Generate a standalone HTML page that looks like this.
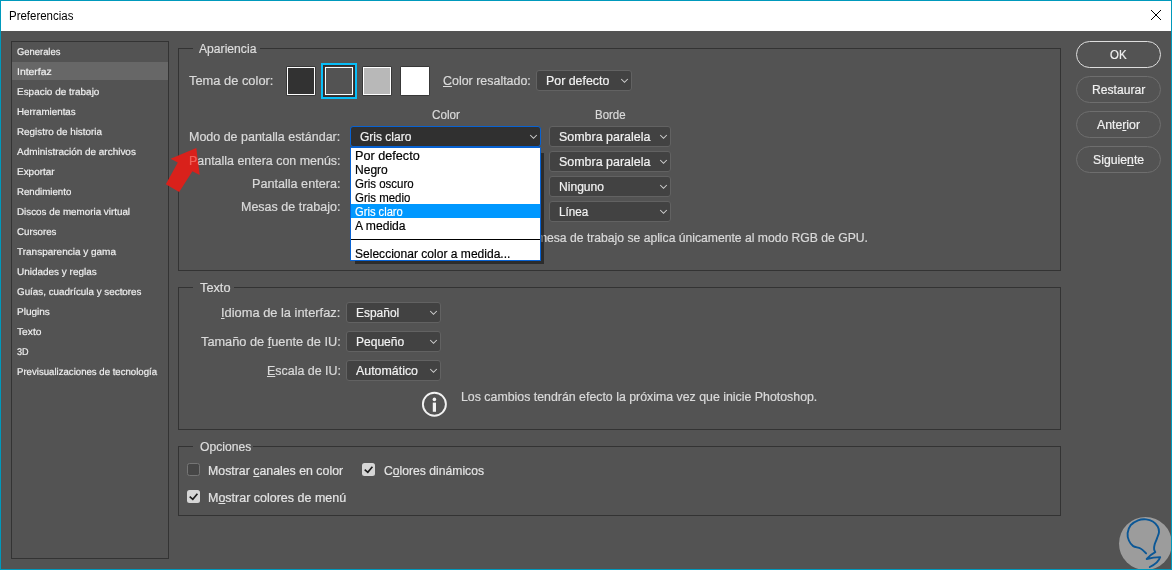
<!DOCTYPE html>
<html lang="es"><head><meta charset="utf-8"><title>Preferencias</title>
<style>
html,body{margin:0;padding:0}
body{width:1172px;height:570px;overflow:hidden;position:relative;background:#535353;font-family:"Liberation Sans",sans-serif}
.b{position:absolute;box-sizing:content-box;display:block}
.t{position:absolute;white-space:nowrap;line-height:16px;transform-origin:0 0;display:block;-webkit-text-stroke:0.2px currentColor}
u{text-decoration:underline;text-underline-offset:1px;text-decoration-thickness:1px}
</style></head>
<body>
<div class="b" style="left:1px;top:1px;width:1170px;height:30px;background:#ffffff;"></div>
<span class="t" style="left:8.60px;top:8px;font-size:12px;color:#000000;transform:scaleX(0.9559);-webkit-text-stroke:0;">Preferencias</span>
<svg class="b" style="left:1150px;top:9px" width="12" height="12" viewBox="0 0 12 12"><path d="M1 1 L11 11 M11 1 L1 11" stroke="#000" stroke-width="1.0" fill="none"/></svg>
<div class="b" style="left:11px;top:41px;width:156px;height:516px;border:1px solid #333333;"></div>
<div class="b" style="left:12px;top:62px;width:156px;height:18px;background:#676767;"></div>
<span class="t" style="left:17.10px;top:45px;font-size:9.8px;color:#f0f0f0;transform:scaleX(0.9598);text-rendering:geometricPrecision;-webkit-text-stroke:0.18px #f0f0f0;">Generales</span>
<span class="t" style="left:17.10px;top:65px;font-size:9.8px;color:#f0f0f0;transform:scaleX(1.0617);text-rendering:geometricPrecision;-webkit-text-stroke:0.18px #f0f0f0;">Interfaz</span>
<span class="t" style="left:17.10px;top:85px;font-size:9.8px;color:#f0f0f0;transform:scaleX(1.0150);text-rendering:geometricPrecision;-webkit-text-stroke:0.18px #f0f0f0;">Espacio de trabajo</span>
<span class="t" style="left:17.10px;top:105px;font-size:9.8px;color:#f0f0f0;transform:scaleX(0.9980);text-rendering:geometricPrecision;-webkit-text-stroke:0.18px #f0f0f0;">Herramientas</span>
<span class="t" style="left:17.10px;top:125px;font-size:9.8px;color:#f0f0f0;transform:scaleX(1.0067);text-rendering:geometricPrecision;-webkit-text-stroke:0.18px #f0f0f0;">Registro de historia</span>
<span class="t" style="left:17.10px;top:145px;font-size:9.8px;color:#f0f0f0;transform:scaleX(1.0153);text-rendering:geometricPrecision;-webkit-text-stroke:0.18px #f0f0f0;">Administración de archivos</span>
<span class="t" style="left:17.10px;top:165px;font-size:9.8px;color:#f0f0f0;transform:scaleX(1.0151);text-rendering:geometricPrecision;-webkit-text-stroke:0.18px #f0f0f0;">Exportar</span>
<span class="t" style="left:17.10px;top:185px;font-size:9.8px;color:#f0f0f0;transform:scaleX(0.9869);text-rendering:geometricPrecision;-webkit-text-stroke:0.18px #f0f0f0;">Rendimiento</span>
<span class="t" style="left:17.10px;top:205px;font-size:9.8px;color:#f0f0f0;transform:scaleX(1.0032);text-rendering:geometricPrecision;-webkit-text-stroke:0.18px #f0f0f0;">Discos de memoria virtual</span>
<span class="t" style="left:17.10px;top:225px;font-size:9.8px;color:#f0f0f0;transform:scaleX(0.9911);text-rendering:geometricPrecision;-webkit-text-stroke:0.18px #f0f0f0;">Cursores</span>
<span class="t" style="left:17.10px;top:245px;font-size:9.8px;color:#f0f0f0;transform:scaleX(1.0191);text-rendering:geometricPrecision;-webkit-text-stroke:0.18px #f0f0f0;">Transparencia y gama</span>
<span class="t" style="left:17.10px;top:265px;font-size:9.8px;color:#f0f0f0;transform:scaleX(1.0160);text-rendering:geometricPrecision;-webkit-text-stroke:0.18px #f0f0f0;">Unidades y reglas</span>
<span class="t" style="left:17.10px;top:285px;font-size:9.8px;color:#f0f0f0;transform:scaleX(1.0025);text-rendering:geometricPrecision;-webkit-text-stroke:0.18px #f0f0f0;">Guías, cuadrícula y sectores</span>
<span class="t" style="left:17.10px;top:305px;font-size:9.8px;color:#f0f0f0;transform:scaleX(1.0235);text-rendering:geometricPrecision;-webkit-text-stroke:0.18px #f0f0f0;">Plugins</span>
<span class="t" style="left:17.10px;top:325px;font-size:9.8px;color:#f0f0f0;transform:scaleX(1.0460);text-rendering:geometricPrecision;-webkit-text-stroke:0.18px #f0f0f0;">Texto</span>
<span class="t" style="left:17.10px;top:345px;font-size:9.8px;color:#f0f0f0;transform:scaleX(0.9258);text-rendering:geometricPrecision;-webkit-text-stroke:0.18px #f0f0f0;">3D</span>
<span class="t" style="left:17.10px;top:365px;font-size:9.8px;color:#f0f0f0;transform:scaleX(0.9815);text-rendering:geometricPrecision;-webkit-text-stroke:0.18px #f0f0f0;">Previsualizaciones de tecnología</span>
<div class="b" style="left:178px;top:48px;width:881px;height:221px;border:1px solid #333333;"></div>
<div class="b" style="left:193px;top:48px;width:67px;height:1px;background:#535353;"></div>
<span class="t" style="left:199.20px;top:41px;font-size:12.5px;color:#dedede;transform:scaleX(0.9717);">Apariencia</span>
<div class="b" style="left:178px;top:287px;width:881px;height:141px;border:1px solid #333333;"></div>
<div class="b" style="left:193px;top:287px;width:41px;height:1px;background:#535353;"></div>
<span class="t" style="left:200.20px;top:280px;font-size:12.5px;color:#dedede;transform:scaleX(1.0209);">Texto</span>
<div class="b" style="left:178px;top:446px;width:881px;height:68px;border:1px solid #333333;"></div>
<div class="b" style="left:193px;top:446px;width:60px;height:1px;background:#535353;"></div>
<span class="t" style="left:199.50px;top:439px;font-size:12.5px;color:#dedede;transform:scaleX(0.9696);">Opciones</span>
<span class="t" style="left:189.20px;top:73px;font-size:12.5px;color:#dadada;transform:scaleX(1.0295);">Tema de color:</span>
<div class="b" style="left:321px;top:63px;width:32px;height:32px;border:2px solid #08bdf7;background:#332b2b;"></div>
<div class="b" style="left:286px;top:66px;width:28px;height:28px;border:1px solid #383838;border-radius:1.5px;"></div>
<div class="b" style="left:287px;top:67px;width:26px;height:26px;border:1px solid #ffffff;background:#323232;"></div>
<div class="b" style="left:324px;top:66px;width:28px;height:28px;border:1px solid #383838;border-radius:1.5px;"></div>
<div class="b" style="left:325px;top:67px;width:26px;height:26px;border:1px solid #ffffff;background:#535353;"></div>
<div class="b" style="left:362px;top:66px;width:28px;height:28px;border:1px solid #383838;border-radius:1.5px;"></div>
<div class="b" style="left:363px;top:67px;width:26px;height:26px;border:1px solid #ffffff;background:#b8b8b8;"></div>
<div class="b" style="left:400px;top:66px;width:28px;height:28px;border:1px solid #383838;border-radius:1.5px;"></div>
<div class="b" style="left:401px;top:67px;width:26px;height:26px;border:1px solid #ffffff;background:#ffffff;"></div>
<span class="t" style="left:443.20px;top:73px;font-size:12.5px;color:#dadada;transform:scaleX(0.9950);"><u>C</u>olor resaltado:</span>
<div class="b" style="left:536px;top:70px;width:94px;height:19px;border:1px solid #626262;background:#424242;border-radius:3px;"></div>
<span class="t" style="left:546.30px;top:73px;font-size:12.5px;color:#f2f2f2;transform:scaleX(0.9901);">Por defecto</span>
<svg class="b" style="left:620px;top:78.2px" width="9" height="6" viewBox="0 0 9 6"><path d="M1.2 1.0 L4.5 4.3 L7.8 1.0" stroke="#d0d0d0" stroke-width="1.05" fill="none"/></svg>
<span class="t" style="left:431.50px;top:107px;font-size:12.5px;color:#dadada;transform:scaleX(0.9374);">Color</span>
<span class="t" style="left:594.60px;top:107px;font-size:12.5px;color:#dadada;transform:scaleX(0.9174);">Borde</span>
<span class="t" style="left:189.30px;top:129px;font-size:12.5px;color:#dadada;transform:scaleX(0.9981);">Modo de pantalla estándar:</span>
<span class="t" style="left:189.00px;top:153px;font-size:12.5px;color:#dadada;transform:scaleX(0.9955);">Pantalla entera con menús:</span>
<span class="t" style="left:252.10px;top:176px;font-size:12.5px;color:#dadada;transform:scaleX(1.0096);">Pantalla entera:</span>
<span class="t" style="left:241.10px;top:199px;font-size:12.5px;color:#dadada;transform:scaleX(1.0004);">Mesas de trabajo:</span>
<div class="b" style="left:549px;top:126px;width:120px;height:19px;border:1px solid #626262;background:#424242;border-radius:3px;"></div>
<span class="t" style="left:559.30px;top:129px;font-size:12.5px;color:#f2f2f2;transform:scaleX(0.9965);">Sombra paralela</span>
<svg class="b" style="left:659px;top:134.2px" width="9" height="6" viewBox="0 0 9 6"><path d="M1.2 1.0 L4.5 4.3 L7.8 1.0" stroke="#d0d0d0" stroke-width="1.05" fill="none"/></svg>
<div class="b" style="left:549px;top:151px;width:120px;height:19px;border:1px solid #626262;background:#424242;border-radius:3px;"></div>
<span class="t" style="left:559.30px;top:154px;font-size:12.5px;color:#f2f2f2;transform:scaleX(0.9965);">Sombra paralela</span>
<svg class="b" style="left:659px;top:159.2px" width="9" height="6" viewBox="0 0 9 6"><path d="M1.2 1.0 L4.5 4.3 L7.8 1.0" stroke="#d0d0d0" stroke-width="1.05" fill="none"/></svg>
<div class="b" style="left:549px;top:176px;width:120px;height:19px;border:1px solid #626262;background:#424242;border-radius:3px;"></div>
<span class="t" style="left:559.30px;top:179px;font-size:12.5px;color:#f2f2f2;transform:scaleX(0.9664);">Ninguno</span>
<svg class="b" style="left:659px;top:184.2px" width="9" height="6" viewBox="0 0 9 6"><path d="M1.2 1.0 L4.5 4.3 L7.8 1.0" stroke="#d0d0d0" stroke-width="1.05" fill="none"/></svg>
<div class="b" style="left:549px;top:201px;width:120px;height:19px;border:1px solid #626262;background:#424242;border-radius:3px;"></div>
<span class="t" style="left:559.30px;top:204px;font-size:12.5px;color:#f2f2f2;transform:scaleX(0.9333);">Línea</span>
<svg class="b" style="left:659px;top:209.2px" width="9" height="6" viewBox="0 0 9 6"><path d="M1.2 1.0 L4.5 4.3 L7.8 1.0" stroke="#d0d0d0" stroke-width="1.05" fill="none"/></svg>
<div class="b" style="left:350px;top:126px;width:189px;height:19px;border:1px solid #0862d2;background:#303030;border-radius:3px;"></div>
<span class="t" style="left:360.30px;top:129px;font-size:12.5px;color:#f2f2f2;transform:scaleX(0.9611);">Gris claro</span>
<svg class="b" style="left:529px;top:134.2px" width="9" height="6" viewBox="0 0 9 6"><path d="M1.2 1.0 L4.5 4.3 L7.8 1.0" stroke="#d0d0d0" stroke-width="1.05" fill="none"/></svg>
<span class="t" style="left:520.38px;top:230px;font-size:12.5px;color:#dadada;transform:scaleX(0.9723);">La mesa de trabajo se aplica únicamente al modo RGB de GPU.</span>
<svg class="b" style="left:160px;top:140px" width="50" height="60" viewBox="160 140 50 60"><polygon points="196.3,147.9 170.6,158.7 177.8,162.4 165.8,184.3 179.2,192 192.4,171.3 199.7,175.1" fill="#d9211b"/></svg>
<div class="b" style="left:160px;top:140px;width:50px;height:60px;clip-path:polygon(36.3px 7.9px,10.6px 18.7px,17.8px 22.4px,5.8px 44.3px,19.2px 52.0px,32.4px 31.3px,39.7px 35.1px)"><span class="t" style="left:calc(-160px + 189.00px);top:calc(-140px + 153px);font-size:12.5px;color:#f0625a;transform:scaleX(0.9955);">Pantalla entera con menús:</span></div>
<div class="b" style="left:355px;top:152.5px;width:188.6px;height:111px;background:rgba(0,0,0,0.47);filter:blur(0.7px);"></div>
<div class="b" style="left:350px;top:147px;width:189px;height:112px;border:1px solid #0862d2;background:#ffffff;"></div>
<div class="b" style="left:351px;top:204px;width:189px;height:14px;background:#0098ff;"></div>
<div class="b" style="left:351px;top:239px;width:189px;height:1px;background:#000000;"></div>
<span class="t" style="left:355.10px;top:148px;font-size:12.5px;color:#000000;transform:scaleX(1.0120);">Por defecto</span>
<span class="t" style="left:355.10px;top:162px;font-size:12.5px;color:#000000;transform:scaleX(0.9635);">Negro</span>
<span class="t" style="left:355.10px;top:176px;font-size:12.5px;color:#000000;transform:scaleX(0.9185);">Gris oscuro</span>
<span class="t" style="left:355.10px;top:190px;font-size:12.5px;color:#000000;transform:scaleX(0.9151);">Gris medio</span>
<span class="t" style="left:355.10px;top:204px;font-size:12.5px;color:#ffffff;transform:scaleX(0.8938);">Gris claro</span>
<span class="t" style="left:355.10px;top:218px;font-size:12.5px;color:#000000;transform:scaleX(0.9707);">A medida</span>
<span class="t" style="left:355.10px;top:246px;font-size:12.5px;color:#000000;transform:scaleX(0.9641);">Seleccionar color a medida...</span>
<span class="t" style="left:221.20px;top:305px;font-size:12.5px;color:#dadada;transform:scaleX(1.0281);"><u>I</u>dioma de la interfaz:</span>
<span class="t" style="left:200.70px;top:334px;font-size:12.5px;color:#dadada;transform:scaleX(1.0212);">Tamaño de <u>f</u>uente de IU:</span>
<span class="t" style="left:266.50px;top:363px;font-size:12.5px;color:#dadada;transform:scaleX(0.9954);"><u>E</u>scala de IU:</span>
<div class="b" style="left:346px;top:302px;width:93px;height:19px;border:1px solid #626262;background:#424242;border-radius:3px;"></div>
<span class="t" style="left:356.30px;top:305px;font-size:12.5px;color:#f2f2f2;transform:scaleX(0.9563);">Español</span>
<svg class="b" style="left:429px;top:310.2px" width="9" height="6" viewBox="0 0 9 6"><path d="M1.2 1.0 L4.5 4.3 L7.8 1.0" stroke="#d0d0d0" stroke-width="1.05" fill="none"/></svg>
<div class="b" style="left:346px;top:331px;width:93px;height:19px;border:1px solid #626262;background:#424242;border-radius:3px;"></div>
<span class="t" style="left:356.30px;top:334px;font-size:12.5px;color:#f2f2f2;transform:scaleX(0.9630);">Pequeño</span>
<svg class="b" style="left:429px;top:339.2px" width="9" height="6" viewBox="0 0 9 6"><path d="M1.2 1.0 L4.5 4.3 L7.8 1.0" stroke="#d0d0d0" stroke-width="1.05" fill="none"/></svg>
<div class="b" style="left:346px;top:360px;width:93px;height:19px;border:1px solid #626262;background:#424242;border-radius:3px;"></div>
<span class="t" style="left:356.30px;top:363px;font-size:12.5px;color:#f2f2f2;transform:scaleX(0.9915);">Automático</span>
<svg class="b" style="left:429px;top:368.2px" width="9" height="6" viewBox="0 0 9 6"><path d="M1.2 1.0 L4.5 4.3 L7.8 1.0" stroke="#d0d0d0" stroke-width="1.05" fill="none"/></svg>
<svg class="b" style="left:420px;top:390px" width="30" height="30" viewBox="420 390 30 30"><circle cx="434.4" cy="404.2" r="11.5" stroke="#f2f2f2" stroke-width="1.9" fill="none"/><circle cx="434.4" cy="399.4" r="1.8" fill="#f2f2f2"/><rect x="432.8" y="402.6" width="3.2" height="9.2" fill="#f2f2f2"/></svg>
<span class="t" style="left:461.20px;top:389px;font-size:12.5px;color:#dadada;transform:scaleX(0.9880);">Los cambios tendrán efecto la próxima vez que inicie Photoshop.</span>
<div class="b" style="left:187px;top:463px;width:11px;height:11px;border:1px solid #757575;background:#464646;border-radius:2.5px;"></div>
<div class="b" style="left:362px;top:463px;width:13px;height:13px;background:#d6d6d6;border-radius:2.5px;"></div>
<svg class="b" style="left:362px;top:463px" width="13" height="13" viewBox="0 0 13 13"><path d="M2.7 6.7 L5.8 9.4 L10.4 3.8" stroke="#1e1e1e" stroke-width="1.7" fill="none"/></svg>
<div class="b" style="left:187px;top:490px;width:13px;height:13px;background:#d6d6d6;border-radius:2.5px;"></div>
<svg class="b" style="left:187px;top:490px" width="13" height="13" viewBox="0 0 13 13"><path d="M2.7 6.7 L5.8 9.4 L10.4 3.8" stroke="#1e1e1e" stroke-width="1.7" fill="none"/></svg>
<span class="t" style="left:208.20px;top:463px;font-size:12.5px;color:#e4e4e4;transform:scaleX(0.9871);">Mostrar <u>c</u>anales en color</span>
<span class="t" style="left:383.50px;top:463px;font-size:12.5px;color:#e4e4e4;transform:scaleX(0.9726);">C<u>o</u>lores dinámicos</span>
<span class="t" style="left:208.20px;top:490px;font-size:12.5px;color:#e4e4e4;transform:scaleX(0.9989);">M<u>o</u>strar colores de menú</span>
<div class="b" style="left:1076px;top:41px;width:83px;height:25px;border:1px solid #dedede;border-radius:14px;"></div>
<span class="t" style="left:1110.30px;top:47px;font-size:12.5px;color:#f0f0f0;transform:scaleX(0.9135);">OK</span>
<div class="b" style="left:1076px;top:76px;width:83px;height:25px;border:1px solid #6e6e6e;border-radius:14px;"></div>
<span class="t" style="left:1092.00px;top:82px;font-size:12.5px;color:#f0f0f0;transform:scaleX(0.9694);">Restaurar</span>
<div class="b" style="left:1076px;top:111px;width:83px;height:25px;border:1px solid #6e6e6e;border-radius:14px;"></div>
<span class="t" style="left:1097.30px;top:117px;font-size:12.5px;color:#f0f0f0;transform:scaleX(0.9824);">Ante<u>r</u>ior</span>
<div class="b" style="left:1076px;top:146px;width:83px;height:25px;border:1px solid #6e6e6e;border-radius:14px;"></div>
<span class="t" style="left:1093.30px;top:152px;font-size:12.5px;color:#f0f0f0;transform:scaleX(0.9803);">Siguie<u>n</u>te</span>
<svg class="b" style="left:1115px;top:513px" width="57" height="57" viewBox="1115 513 57 57"><circle cx="1145.5" cy="543.6" r="26.5" fill="#9c9c9c"/><path d="M1146.1 553.4 C1145.2 552.6 1142.7 549.7 1140.5 548.5 C1138.3 547.3 1135.1 547.4 1133.2 546.1 C1131.3 544.8 1129.8 542.6 1128.9 540.5 C1128.0 538.4 1127.3 535.8 1127.6 533.2 C1127.9 530.7 1129.0 527.4 1130.7 525.2 C1132.5 523.1 1135.5 521.3 1138.1 520.3 C1140.7 519.3 1143.6 519.2 1146.1 519.4 C1148.5 519.6 1150.9 520.3 1152.8 521.5 C1154.7 522.7 1156.7 524.7 1157.7 526.4 C1158.7 528.1 1159.1 529.9 1159.0 531.9 C1158.9 533.9 1157.8 536.0 1157.1 538.1 C1156.4 540.2 1155.2 542.4 1154.7 544.2 C1154.2 546.0 1154.0 547.8 1154.1 549.1 C1154.2 550.4 1155.1 551.7 1155.3 552.2 Q1151.5 554 1146.7 559.0 Q1153.5 557.2 1160.2 557.1 Q1158.5 563 1149.8 567.0" stroke="#0b5796" stroke-width="1.9" fill="none" stroke-linecap="round" stroke-linejoin="round"/></svg>
<div class="b" style="left:0px;top:0px;width:1170px;height:568px;border:1px solid #0099bc;"></div>
</body></html>
